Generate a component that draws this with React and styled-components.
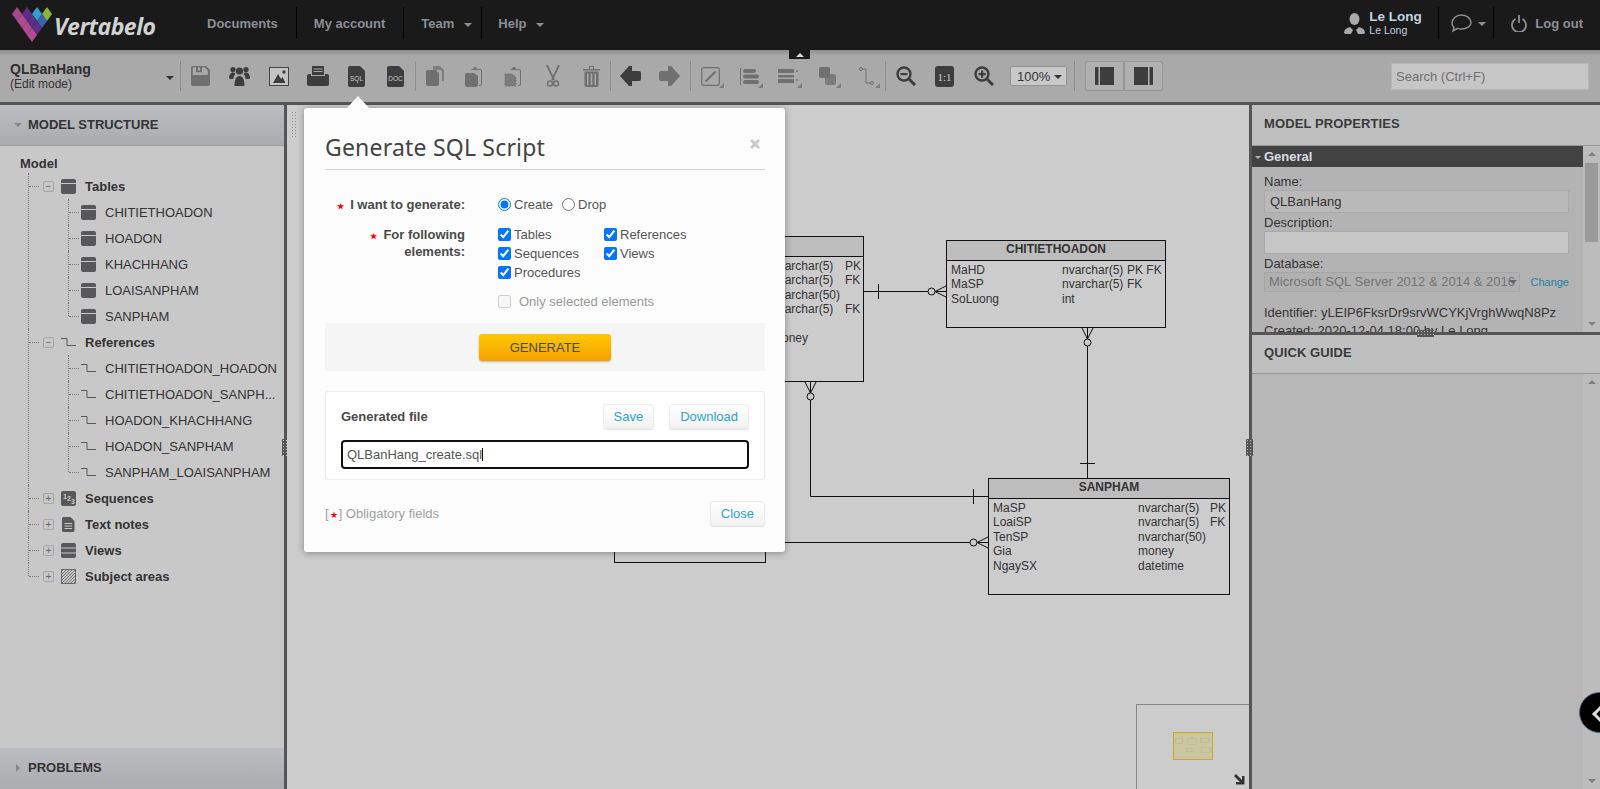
import React from 'react';
import styled, { createGlobalStyle } from 'styled-components';

const GlobalStyle = createGlobalStyle`
  html, body {
    margin: 0;
    height: 100%;
    overflow: hidden;
    background: #ccc;
  }
  * { box-sizing: border-box; }
  body {
    font-family: "Liberation Sans", Arial, sans-serif;
    font-size: 13px;
    color: #333;
  }
`;

const Page = styled.div`
  position: relative;
  width: 1600px;
  height: 789px;
  display: flex;
  flex-direction: column;
  overflow: hidden;
`;

/* top bar */
const Header = styled.header`
  height: 50px;
  flex: none;
  background: #1a1a1a;
  display: flex;
  align-items: center;
  padding-left: 12px;
`;
const Brand = styled.div`
  width: 182px;
  display: flex;
  align-items: center;
`;
const BrandName = styled.span`
  font-family: "Open Sans", sans-serif;
  font-style: italic;
  font-weight: 700;
  font-size: 23px;
  letter-spacing: -0.5px;
  color: #d2d2d2;
  margin: 1px 0 0 2px;
`;
const NavItem = styled.a`
  height: 32px;
  margin-top: -4px;
  display: flex;
  align-items: center;
  padding: 0 18px 0 ${(p) => p.$first ? '13px' : p.$last ? '16px' : '17px'};
  border-right: ${(p) => p.$last ? '0' : '1px solid #000'};
  font-weight: bold;
  font-size: 13px;
  color: #8b8f94;
`;
const NavCaret = styled.i`
  width: 0;
  height: 0;
  margin: 3px -9px 0 10px;
  border: 4px solid transparent;
  border-top: 4px solid #8b8f94;
  border-bottom: 0;
`;
const UserBox = styled.div`
  margin-left: auto;
  display: flex;
  align-items: center;
  height: 32px;
  margin-top: -4px;
`;
const UserNames = styled.div`
  margin-left: 4px;
  width: 69px;
  color: #c3d2e0;
  font-weight: bold;
  font-size: 13.5px;
  line-height: 15px;
  small {
    display: block;
    font-size: 10.5px;
    line-height: 13px;
    font-weight: normal;
  }
`;
const UserPart = styled.div`
  height: 32px;
  display: flex;
  align-items: center;
  gap: 6px;
  padding: 0 ${(p) => p.$pad || 0}px 0 ${(p) => p.$padLeft || 0}px;
  border-left: ${(p) => p.$border ? '1px solid #000' : '0'};
  color: ${(p) => p.$color};
`;
const ChatCaret = styled(NavCaret)`
  margin: 2px 0 0 0;
`;
const LogOut = styled.span`
  margin-left: 2px;
  color: #8b8f94;
  font-weight: bold;
  font-size: 13px;
`;
const CollapseTab = styled.div`
  position: absolute;
  left: 789px;
  top: 50px;
  width: 21px;
  height: 9px;
  background: #1a1a1a;
  z-index: 2;
  display: flex;
  justify-content: center;
  align-items: center;
  &::after {
    content: '';
    border: 4px solid transparent;
    border-bottom: 4px solid #ddd;
    border-top: 0;
  }
`;

/* toolbar */
const Toolbar = styled.div`
  height: 55px;
  flex: none;
  display: flex;
  align-items: center;
  border-bottom: 3px solid #555;
  background: linear-gradient(#8e8e8e 0, #a8a8a8 6px, #ababab 100%);
`;
const Project = styled.div`
  width: 180px;
  height: 52px;
  padding: 12px 0 0 10px;
  position: relative;
  line-height: 14px;
  font-size: 12px;
  color: #333;
  strong {
    display: block;
    font-size: 14px;
    line-height: 15px;
    color: #2e2e2e;
  }
  &::after {
    content: '';
    position: absolute;
    right: 6px;
    top: 26px;
    border: 4px solid transparent;
    border-top: 4px solid #333;
    border-bottom: 0;
  }
`;
const Sep = styled.span`
  width: 1px;
  height: 30px;
  flex: none;
  background: #8e8e8e;
  margin: 0 ${(p) => p.$right || 0}px 0 ${(p) => p.$left || 0}px;
`;
const ToolGroup = styled.div`
  display: flex;
  align-items: center;
`;
const Tool = styled.button`
  position: relative;
  width: 39px;
  height: 30px;
  padding: 0;
  border: 0;
  background: none;
  display: flex;
  align-items: center;
  justify-content: center;
  color: ${(p) => p.$off ? '#707070' : '#3d3d3d'};
  ${(p) => p.$menu && `
    &::after {
      content: '';
      position: absolute;
      right: 6px;
      bottom: 3px;
      border-style: solid;
      border-width: 0 0 5px 5px;
      border-color: transparent transparent #7c7c7c transparent;
    }
  `}
`;
const ZoomSelect = styled.div`
  width: 57px;
  height: 20px;
  margin-left: 7px;
  background: #c9c9c9;
  border: 1px solid #929292;
  border-radius: 2px;
  display: flex;
  align-items: center;
  justify-content: space-between;
  padding: 0 4px 0 6px;
  font-size: 13px;
  color: #333;
  &::after {
    content: '';
    border: 4px solid transparent;
    border-top: 4px solid #333;
    border-bottom: 0;
    margin-top: 2px;
  }
`;
const ToggleGroup = styled.div`
  display: flex;
`;
const Toggle = styled.div`
  width: 39px;
  height: 30px;
  background: #b0b0b0;
  border: 1px solid #969696;
  border-radius: ${(p) => p.$right ? '0 3px 3px 0' : '3px 0 0 3px'};
  display: flex;
  align-items: center;
  justify-content: center;
  color: #3d3d3d;
`;
const Search = styled.div`
  margin: 0 11px 0 auto;
  width: 198px;
  height: 27px;
  background: #c6c6c6;
  border: 1px solid #b6b6b6;
  padding: 0 4px;
  line-height: 25px;
  font-size: 13px;
  color: #6f6f6f;
`;

/* main area */
const Main = styled.div`
  flex: 1;
  display: flex;
  min-height: 0;
`;
const LeftPanel = styled.aside`
  position: relative;
  width: 287px;
  flex: none;
  display: flex;
  flex-direction: column;
  background: #c8c8c8;
  border-right: 3px solid #555;
`;
const PanelHead = styled.div`
  height: ${(p) => p.$h}px;
  flex: none;
  display: flex;
  align-items: center;
  gap: 6px;
  padding: 0 0 2px 14px;
  background: linear-gradient(#bcbdc0, #a9abae);
  border-bottom: ${(p) => p.$open ? '1px solid #9d9d9d' : '0'};
  font-size: 13px;
  font-weight: bold;
  color: #333;
`;
const CaretDown = styled.i`
  border: 4px solid transparent;
  border-top: 4px solid #868686;
  border-bottom: 0;
  margin-top: 2px;
`;
const CaretRight = styled.i`
  border: 4px solid transparent;
  border-left: 4px solid #868686;
  border-right: 0;
  margin: 0 2px;
`;
const TreeBox = styled.div`
  flex: 1;
  padding: 8px 0 0 20px;
`;
const ModelName = styled.div`
  font-weight: bold;
  font-size: 13px;
  line-height: 19px;
  color: #333;
`;
const Branch = styled.ul`
  list-style: none;
  margin: 0 0 0 ${(p) => p.$inner ? 25 : 8}px;
  padding: 0;
`;
const Leaf = styled.li`
  position: relative;
  padding-left: ${(p) => p.$inner ? 13 : 15}px;
  &::before {
    content: '';
    position: absolute;
    left: 0;
    top: 0;
    bottom: 0;
    border-left: 1px dotted #777;
  }
  &:last-child::before { bottom: auto; height: 13px; }
  &::after {
    content: '';
    position: absolute;
    left: 1px;
    top: 13px;
    width: 10px;
    border-top: 1px dotted #777;
  }
`;
const Row = styled.div`
  height: 26px;
  display: flex;
  align-items: center;
  font-size: 13px;
  color: #333;
  white-space: nowrap;
  font-weight: ${(p) => p.$bold ? 'bold' : 'normal'};
`;
const PlusBox = styled.span`
  width: 11px;
  height: 11px;
  flex: none;
  border: 1px solid #a5a5a5;
  border-radius: 2px;
  margin-right: 7px;
  color: #666;
  display: flex;
  align-items: center;
  justify-content: center;
  font-size: 10px;
  line-height: 9px;
  font-weight: normal;
`;
const RowIcon = styled.span`
  width: 15px;
  height: 15px;
  flex: none;
  margin-right: ${(p) => p.$gap || 9}px;
  display: flex;
  color: #58585a;
`;
const Handle = styled.div`
  position: absolute;
  right: ${(p) => p.$right}px;
  top: 334px;
  width: 7px;
  height: 17px;
  background: #555;
  border-radius: 1px;
  background-image: radial-gradient(#bbb 0.6px, transparent 0.7px);
  background-size: 3px 3px;
`;

const Canvas = styled.main`
  position: relative;
  flex: 1;
  background: #ccc;
  overflow: hidden;
`;
const Grip = styled.div`
  position: absolute;
  left: 4px;
  top: 6px;
  width: 6px;
  height: 28px;
  background-image: radial-gradient(#8f8f8f 0.7px, transparent 0.8px);
  background-size: 3px 3px;
`;
const Lines = styled.svg`
  position: absolute;
  left: 0;
  top: 0;
`;
const TableNode = styled.div`
  position: absolute;
  left: ${(p) => p.$x - 287}px;
  top: ${(p) => p.$y - 105}px;
  width: ${(p) => p.$w}px;
  height: ${(p) => p.$h}px;
  background: #ccc;
  border: 1px solid #111;
  font-size: 12px;
  color: #333;
`;
const TableTitle = styled.div`
  height: 20px;
  background: #bdbdbd;
  border-bottom: 1px solid #111;
  text-align: center;
  font-weight: bold;
  line-height: 17px;
`;
const TableRows = styled.div`
  padding: 2px 2px 0 4px;
  display: grid;
  grid-template-columns: ${(p) => p.$cols};
  grid-auto-rows: 14.4px;
  line-height: 14.4px;
  white-space: nowrap;
`;
const MiniMap = styled.div`
  position: absolute;
  right: 0;
  bottom: 0;
  width: 113px;
  height: 85px;
  background: #ccc;
  border: 1px solid #888;
  border-right: 0;
  border-bottom: 0;
`;
const MiniView = styled.div`
  position: absolute;
  left: 36px;
  top: 27px;
  width: 40px;
  height: 28px;
  background: #cbc6a2;
  border: 1px solid #cfa526;
`;
const MiniTable = styled.i`
  position: absolute;
  left: ${(p) => p.$x}px;
  top: ${(p) => p.$y}px;
  width: ${(p) => p.$w}px;
  height: ${(p) => p.$h}px;
  border: 1px solid #c2bb94;
`;
const MiniArrow = styled.svg`
  position: absolute;
  right: 4px;
  bottom: 4px;
`;

/* right panel */
const RightPanel = styled.aside`
  position: relative;
  width: 351px;
  flex: none;
  display: flex;
  flex-direction: column;
  background: #b8b8b8;
  border-left: 3px solid #555;
`;
const PropsHead = styled.div`
  height: ${(p) => p.$h}px;
  flex: none;
  display: flex;
  align-items: center;
  padding: 0 0 3px 12px;
  background: #bfbfbf;
  border-bottom: 1px solid #969696;
  font-weight: bold;
  font-size: 13px;
  letter-spacing: 0.1px;
  color: #3a3a3a;
`;
const PropsBody = styled.div`
  position: relative;
  height: 186px;
  flex: none;
  overflow: hidden;
  background: #b3b3b3;
`;
const GeneralBar = styled.div`
  width: 331px;
  height: 21px;
  background: #424242;
  color: #d8dee4;
  font-weight: bold;
  font-size: 13px;
  display: flex;
  align-items: center;
  gap: 3px;
  padding-left: 3px;
  i {
    border: 3.5px solid transparent;
    border-top: 3.5px solid #b5b5b5;
    border-bottom: 0;
    margin-top: 1px;
  }
`;
const Fields = styled.div`
  width: 331px;
  padding: 7px 0 0 12px;
  font-size: 13px;
  color: #333;
  line-height: 16px;
`;
const FieldLabel = styled.div`
  margin-top: ${(p) => p.$top || 0}px;
`;
const Field = styled.div`
  width: 305px;
  height: 23px;
  padding: 0 5px;
  line-height: 21px;
  background: ${(p) => p.$bg};
  border: 1px solid #a9a9a9;
`;
const DbRow = styled.div`
  display: flex;
  align-items: center;
  justify-content: space-between;
  width: 305px;
  margin-bottom: 12px;
  a {
    color: #267f9f;
    font-size: 11px;
  }
`;
const DbSelect = styled.div`
  position: relative;
  width: 256px;
  height: 20px;
  overflow: hidden;
  white-space: nowrap;
  padding: 0 4px;
  line-height: 18px;
  color: #737373;
  font-size: 13px;
  background: #b0b0b0;
  border: 1px solid #a5a5a5;
  &::after {
    content: '';
    position: absolute;
    right: 2px;
    top: 7px;
    border: 4px solid transparent;
    border-top: 4px solid #666;
    border-bottom: 0;
  }
`;
const InfoLine = styled.div`
  line-height: 18px;
  white-space: nowrap;
`;
const ScrollCol = styled.div`
  position: absolute;
  right: 0;
  top: 0;
  bottom: 0;
  width: 17px;
  background: #bcbcbc;
  display: flex;
  flex-direction: column;
  align-items: center;
  justify-content: space-between;
  padding: 6px 0;
`;
const ScrollThumb = styled.div`
  position: absolute;
  left: 2px;
  top: 17px;
  width: 13px;
  height: 79px;
  background: #9a9a9a;
`;
const ScrollUp = styled.i`
  border: 4px solid transparent;
  border-bottom: 4px solid #7f7f7f;
  border-top: 0;
`;
const ScrollDown = styled.i`
  border: 4px solid transparent;
  border-top: 4px solid #7f7f7f;
  border-bottom: 0;
`;
const SplitBar = styled.div`
  position: relative;
  height: 3px;
  flex: none;
  background: #555;
  &::after {
    content: '';
    position: absolute;
    left: 165px;
    top: -2px;
    width: 17px;
    height: 7px;
    background-color: #555;
    background-image: radial-gradient(#bbb 0.6px, transparent 0.7px);
    background-size: 3px 3px;
  }
`;
const GuideBody = styled.div`
  position: relative;
  flex: 1;
  background: #b7b7b7;
`;
const ChatBubble = styled.div`
  position: absolute;
  left: 1579px;
  top: 692px;
  width: 41px;
  height: 41px;
  border-radius: 50%;
  background: #000;
  border: 1px solid #4d6c80;
  z-index: 3;
  &::after {
    content: '';
    position: absolute;
    left: 15px;
    top: 14px;
    width: 11px;
    height: 11px;
    border-left: 3px solid #ddd;
    border-bottom: 3px solid #ddd;
    transform: rotate(45deg);
  }
`;

/* modal */
const Modal = styled.section`
  position: absolute;
  left: 304px;
  top: 108px;
  width: 481px;
  height: 444px;
  z-index: 2;
  padding: 0 20px 0 21px;
  background: #fcfcfc;
  border-radius: 3px;
  box-shadow: 0 1px 7px rgba(0, 0, 0, 0.35);
  &::before {
    content: '';
    position: absolute;
    left: 43px;
    top: -12px;
    border: 11px solid transparent;
    border-bottom: 12px solid #fcfcfc;
    border-top: 0;
  }
`;
const ModalTitle = styled.div`
  height: 62px;
  padding-top: 23px;
  border-bottom: 1px solid #d5d5d5;
  display: flex;
  justify-content: space-between;
  h2 {
    margin: 0;
    font-family: "Noto Sans", sans-serif;
    font-weight: normal;
    font-size: 23px;
    line-height: 33px;
    letter-spacing: 0.2px;
    color: #444;
  }
  svg { margin: 8px 5px 0 0; }
`;
const FormRow = styled.div`
  display: flex;
  margin-top: ${(p) => p.$top}px;
`;
const FormLabel = styled.div`
  width: 140px;
  margin-right: 33px;
  text-align: right;
  font-weight: bold;
  font-size: 13px;
  line-height: ${(p) => p.$lh}px;
  color: #4a4a4a;
  i {
    color: #f00;
    font-style: normal;
    font-size: 8px;
    margin-right: 6px;
  }
`;
const Choices = styled.div`
  display: grid;
  margin-top: -2px;
  grid-template-columns: repeat(2, 106px);
  grid-auto-rows: 19px;
`;
const RadioRow = styled.div`
  display: flex;
  height: 19px;
  gap: 9px;
`;
const Choice = styled.label`
  display: flex;
  align-items: center;
  height: 19px;
  gap: ${(p) => p.$gap || 3}px;
  font-size: 13px;
  color: ${(p) => p.$muted ? '#999' : '#555'};
  input {
    width: 13px;
    height: 13px;
    margin: 0;
    flex: none;
  }
`;
const Strip = styled.div`
  margin-top: 12px;
  height: 48px;
  background: #f5f5f5;
  display: flex;
  align-items: center;
  justify-content: center;
`;
const GenerateButton = styled.button`
  width: 132px;
  height: 27px;
  padding: 0;
  border: 0;
  border-radius: 3px;
  background: linear-gradient(#ffc900, #f5a100);
  box-shadow: 0 1px 2px rgba(0, 0, 0, 0.25);
  font-family: inherit;
  font-size: 13px;
  color: #4a4a4a;
`;
const FileCard = styled.div`
  margin-top: 20px;
  height: 89px;
  padding: 12px 15px;
  background: #fff;
  border: 1px solid #ececec;
  border-radius: 3px;
`;
const FileHead = styled.div`
  display: flex;
  align-items: center;
  gap: 15px;
  strong {
    margin-right: auto;
    color: #4a4a4a;
    font-size: 13px;
  }
`;
const SoftButton = styled.button`
  height: 25px;
  padding: 0 ${(p) => p.$pad}px;
  border: 1px solid #ececec;
  border-radius: 3px;
  background: linear-gradient(#fff, #f2f2f2);
  box-shadow: 0 1px 1px rgba(0, 0, 0, 0.12);
  font-family: inherit;
  font-size: 13px;
  color: #31a3cc;
`;
const FileName = styled.div`
  margin-top: 11px;
  height: 29px;
  padding: 0 4px;
  border: 2px solid #111;
  border-radius: 4px;
  background: #fff;
  display: flex;
  align-items: center;
  font-size: 13px;
  color: #555;
  b {
    width: 1px;
    height: 13px;
    background: #111;
  }
`;
const ModalFoot = styled.div`
  margin-top: 21px;
  display: flex;
  align-items: center;
  justify-content: space-between;
  font-size: 13px;
  color: #a0a0a0;
  i {
    color: #f00;
    font-style: normal;
    font-size: 9px;
    padding: 0 1px;
  }
`;

const Svg = ({ w = 20, h = 20, children, ...rest }) => (
  <svg width={w} height={h} viewBox={`0 0 ${w} ${h}`} fill="currentColor" {...rest}>{children}</svg>
);

// lattice of diamonds, top row down to the tip
const logoTiles = [
  [5, 7, '#a8488a'], [15, 7, '#5b2f86'], [25, 7, '#2f9fd2'], [35, 7, '#8bb53a'],
  [10, 14, '#b04b90'], [20, 14, '#5b2f86'], [30, 14, '#3d62a8'],
  [15, 21, '#b04b90'], [25, 21, '#5b2f86'],
  [20, 28, '#b04b90'],
];

const Logo = () => (
  <svg width="40" height="36" viewBox="0 0 40 36">
    {logoTiles.map(([x, y, fill]) => (
      <polygon key={`${x}-${y}`} points={`${x - 5},${y} ${x},${y - 7} ${x + 5},${y} ${x},${y + 7}`} fill={fill} />
    ))}
  </svg>
);

const I = {
  save: <Svg w={19} h={20}><path d="M2 0h13l4 4v14a2 2 0 0 1-2 2H2a2 2 0 0 1-2-2V2a2 2 0 0 1 2-2zm.8 1.2a1 1 0 0 0-1 1V9h15V4.5l-3-3.3H11v5H5v-5zM7 1.5h2v3H7z" fillRule="evenodd" /></Svg>,
  people: <Svg w={21} h={20}><circle cx="10.5" cy="5" r="3.6" /><circle cx="4" cy="3.6" r="2.6" /><circle cx="17" cy="3.6" r="2.6" /><path d="M5.5 20c0-6 1.500-10 5-10s5 4 5 10zM0 12c0-3 1.500-5.500 4-5.500 1 0 2 .4 2.500 1.200C5 9.500 4.500 11 4.300 13H1zM21 12c0-3-1.500-5.500-4-5.500-1 0-2 .4-2.500 1.200 1.500 1.800 2 3.300 2.200 5.300H20z" /></Svg>,
  image: <Svg w={20} h={19}><rect x=".5" y=".5" width="19" height="18" fill="#c4c4c4" stroke="#444" /><path d="M4 16l5-9 3 5 1.500-2 3 6z" /><circle cx="15" cy="5" r="1.700" /></Svg>,
  print: <Svg w={22} h={20}><path d="M5 0h12v9H5zm1.500 2.500v1h9v-1zm0 2.500v1h9V5z" fillRule="evenodd" /><path d="M4 8v2h14V8h2a2 2 0 0 1 2 2v8a2 2 0 0 1-2 2H2a2 2 0 0 1-2-2v-8a2 2 0 0 1 2-2z" /></Svg>,
  copy: <Svg w={19} h={20}><path d="M7 0h7l4 4v11h-2V6a2 2 0 0 0-2-2H7z" opacity=".75" /><path d="M2 4h8l3 3v11a2 2 0 0 1-2 2H2a2 2 0 0 1-2-2V6a2 2 0 0 1 2-2z" /></Svg>,
  paste: <Svg w={19} h={21}><path d="M6 3h2l1-2h2l1 2h3a2 2 0 0 1 2 2v13a2 2 0 0 1-2 2h-1v-1h1a1 1 0 0 0 1-1V5a1 1 0 0 0-1-1H7z" /><path d="M2 7h7l4 3v9a2 2 0 0 1-2 2H2a2 2 0 0 1-2-2V9a2 2 0 0 1 2-2z" /></Svg>,
  pasteDashed: <Svg w={19} h={21}><path d="M6 3h2l1-2h2l1 2h3a2 2 0 0 1 2 2v13a2 2 0 0 1-2 2h-1v-1h1a1 1 0 0 0 1-1V5a1 1 0 0 0-1-1H7z" /><path d="M1 8h7l4 3v9H1z" stroke="currentColor" strokeDasharray="1.500 1.500" fill="currentColor" fillOpacity=".8" /></Svg>,
  scissors: <Svg w={14} h={22}><path d="M1 0l7 15M13 0L6 15" stroke="currentColor" strokeWidth="1.800" fill="none" /><circle cx="4" cy="18.500" r="2.500" fill="none" stroke="currentColor" strokeWidth="1.500" /><circle cx="10" cy="18.500" r="2.500" fill="none" stroke="currentColor" strokeWidth="1.500" /></Svg>,
  trash: <Svg w={17} h={21}><path d="M0 3h17v1.500H0zM6 0h5v3h-1V1H7v2H6z" /><path d="M1.500 5.500h14V19a2 2 0 0 1-2 2h-10a2 2 0 0 1-2-2zM4 7.500V19h1.500V7.500zm3.700 0V19h1.600V7.500zm3.800 0V19H13V7.500z" fillRule="evenodd" /></Svg>,
  back: <Svg w={21} h={20}><path d="M0 10L9 0h3v5h7a2 2 0 0 1 2 2v6a2 2 0 0 1-2 2h-7v5H9z" /></Svg>,
  forward: <Svg w={21} h={20}><path d="M21 10L12 0H9v5H2a2 2 0 0 0-2 2v6a2 2 0 0 0 2 2h7v5h3z" /></Svg>,
  lineBox: <Svg w={19} h={19}><rect x=".7" y=".7" width="17.600" height="17.600" rx="2" fill="none" stroke="currentColor" strokeWidth="1.200" /><path d="M4.500 14.500l10-10" stroke="currentColor" strokeWidth="2" /></Svg>,
  align: <Svg w={19} h={17}><rect x="0" y="0" width="1" height="17" /><rect x="3" y="1" width="13" height="4" rx="2" /><rect x="3" y="6.500" width="16" height="4" rx="2" /><rect x="3" y="12" width="16" height="4" rx="2" /></Svg>,
  dist: <Svg w={21} h={16}><rect x="0" y="1" width="16" height="4" /><rect x="0" y="7" width="16" height="2.500" /><rect x="0" y="11" width="16" height="4" /><path d="M18 2l2 2M20 2l-2 2M18 13l1-2 1 2" stroke="currentColor" strokeWidth=".8" fill="none" /></Svg>,
  layers: <Svg w={17} h={18}><rect x="0" y="0" width="11" height="11" rx="2" /><rect x="6" y="7" width="11" height="11" rx="2" opacity=".8" /></Svg>,
  connector: <Svg w={15} h={18}><circle cx="2" cy="2" r="1.500" fill="none" stroke="currentColor" /><circle cx="13" cy="16" r="1.500" fill="none" stroke="currentColor" /><path d="M3.500 2H7v14h4.500" fill="none" stroke="currentColor" /></Svg>,
  zoomOut: <Svg w={20} h={20}><circle cx="8" cy="8" r="6.500" fill="none" stroke="currentColor" strokeWidth="2.400" /><path d="M13 13l6 6" stroke="currentColor" strokeWidth="3" /><rect x="4.500" y="7" width="7" height="2.200" /></Svg>,
  zoomIn: <Svg w={20} h={20}><circle cx="8" cy="8" r="6.500" fill="none" stroke="currentColor" strokeWidth="2.400" /><path d="M13 13l6 6" stroke="currentColor" strokeWidth="3" /><path d="M4.500 7h2.500V4.500h2.200V7h2.500v2.200H9.200v2.500H7V9.200H4.500z" /></Svg>,
  panelLeft: <Svg w={19} h={18}><rect x="0" y="0" width="3.500" height="18" /><rect x="5" y="0" width="14" height="18" /></Svg>,
  panelRight: <Svg w={19} h={18}><rect x="0" y="0" width="14" height="18" /><rect x="15.500" y="0" width="3.500" height="18" /></Svg>,
  user: <Svg w={21} h={21}><ellipse cx="10.500" cy="6" rx="5" ry="6" /><path d="M0 20c0-3 2-5 6-6l3 3-2 4H1.500zM21 20c0-3-2-5-6-6l-3 3 2 4h5.500z" /></Svg>,
  chat: <svg width="21" height="20" viewBox="0 0 21 20" fill="none" stroke="currentColor" strokeWidth="1.500"><path d="M3 14.500C1.500 13 1 11.500 1 10c0-4 4-8 9.500-8S20 6 20 9.500 16 16 10.500 16c-1.500 0-3-.2-4-.7L2 18z" /></svg>,
  power: <svg width="16" height="17" viewBox="0 0 16 17" fill="none" stroke="currentColor" strokeWidth="1.800"><path d="M4.500 4A7 7 0 1 0 11.500 4M8 0v8" /></svg>,
};

const DocIcon = ({ label }) => (
  <Svg w={17} h={21}>
    <path d="M2 0h10l5 5v14a2 2 0 0 1-2 2H2a2 2 0 0 1-2-2V2a2 2 0 0 1 2-2z" />
    <text x="8.500" y="15" textAnchor="middle" fontSize="6.500" fontFamily="Liberation Sans" fill="#ccc">{label}</text>
  </Svg>
);

const TableIcon = () => (
  <Svg w={15} h={15}>
    <path d="M2 0h11a2 2 0 0 1 2 2v2H0V2a2 2 0 0 1 2-2zM0 5h15v8a2 2 0 0 1-2 2H2a2 2 0 0 1-2-2z" />
  </Svg>
);
const RefIcon = () => (
  <svg width="15" height="15" viewBox="0 0 15 15" fill="none" stroke="currentColor">
    <path d="M0 3.500h6v7h9" />
  </svg>
);
const SeqIcon = () => (
  <Svg w={15} h={15}>
    <rect width="15" height="15" rx="2" />
    <text x="2" y="8" fontSize="7" fill="#ccc" fontFamily="Liberation Sans">1</text>
    <text x="6" y="10" fontSize="7" fill="#ccc" fontFamily="Liberation Sans">2</text>
    <text x="10" y="13" fontSize="7" fill="#ccc" fontFamily="Liberation Sans">3</text>
  </Svg>
);
const NoteIcon = () => (
  <Svg w={15} h={15}>
    <path d="M2.500 0h7l4 4v9.500a1.500 1.500 0 0 1-1.500 1.500H2.500A1.500 1.500 0 0 1 1 13.500v-12A1.500 1.500 0 0 1 2.500 0zM3.500 6v1H11V6zm0 2.500v1H11v-1zm0 2.500v1H11v-1z" fillRule="evenodd" />
  </Svg>
);
const ViewIcon = () => (
  <Svg w={15} h={15}>
    <path d="M2 0h11a2 2 0 0 1 2 2v2.500H0V2a2 2 0 0 1 2-2zM0 5.500h15v4H0zM0 10.500h15V13a2 2 0 0 1-2 2H2a2 2 0 0 1-2-2z" />
  </Svg>
);
const AreaIcon = () => (
  <svg width="15" height="15" viewBox="0 0 15 15" fill="none" stroke="#58585a" strokeWidth=".8">
    <rect x=".5" y=".5" width="14" height="14" />
    <path d="M0 3L3 0M0 6L6 0M0 9L9 0M0 12L12 0M0 15L15 0M3 15L15 3M6 15L15 6M9 15L15 9M12 15L15 12" />
  </svg>
);

const tableNames = ['CHITIETHOADON', 'HOADON', 'KHACHHANG', 'LOAISANPHAM', 'SANPHAM'];
const refNames = ['CHITIETHOADON_HOADON', 'CHITIETHOADON_SANPH...', 'HOADON_KHACHHANG', 'HOADON_SANPHAM', 'SANPHAM_LOAISANPHAM'];
const closedGroups = [
  ['Sequences', <SeqIcon />],
  ['Text notes', <NoteIcon />],
  ['Views', <ViewIcon />],
  ['Subject areas', <AreaIcon />],
];

const ModelTree = () => (
  <TreeBox>
    <ModelName>Model</ModelName>
    <Branch>
      <Leaf>
        <Row $bold><PlusBox>−</PlusBox><RowIcon><TableIcon /></RowIcon>Tables</Row>
        <Branch $inner>
          {tableNames.map((name) => (
            <Leaf $inner key={name}><Row><RowIcon><TableIcon /></RowIcon>{name}</Row></Leaf>
          ))}
        </Branch>
      </Leaf>
      <Leaf>
        <Row $bold><PlusBox>−</PlusBox><RowIcon><RefIcon /></RowIcon>References</Row>
        <Branch $inner>
          {refNames.map((name) => (
            <Leaf $inner key={name}><Row><RowIcon><RefIcon /></RowIcon>{name}</Row></Leaf>
          ))}
        </Branch>
      </Leaf>
      {closedGroups.map(([name, icon]) => (
        <Leaf key={name}>
          <Row $bold><PlusBox>+</PlusBox><RowIcon>{icon}</RowIcon>{name}</Row>
        </Leaf>
      ))}
    </Branch>
  </TreeBox>
);

const ErTable = ({ x, y, w, h, title, cols, rows = [] }) => (
  <TableNode $x={x} $y={y} $w={w} $h={h}>
    <TableTitle>{title}</TableTitle>
    <TableRows $cols={cols}>
      {rows.flat().map((cell, i) => <span key={i}>{cell}</span>)}
    </TableRows>
  </TableNode>
);

const CrowFoot = ({ cx, cy, prongs }) => (
  <>
    <circle cx={cx} cy={cy} r="3.500" />
    <path d={prongs} />
  </>
);

const Diagram = () => (
  <Canvas>
    <Grip />
    {/* the modal covers the rest of these two tables */}
    <ErTable x={620} y={236} w={244} h={146} cols="147px 73px 20px"
      rows={[['', 'nvarchar(5)', 'PK'], ['', 'nvarchar(5)', 'FK'], ['', 'nvarchar(50)', ''], ['', 'nvarchar(5)', 'FK'], ['', '', ''], ['', 'money', '']]} />
    <ErTable x={614} y={450} w={152} h={113} />
    <ErTable x={946} y={240} w={220} h={88} title="CHITIETHOADON" cols="111px 65px 40px"
      rows={[['MaHD', 'nvarchar(5)', 'PK FK'], ['MaSP', 'nvarchar(5)', 'FK'], ['SoLuong', 'int', '']]} />
    <ErTable x={988} y={478} w={242} h={117} title="SANPHAM" cols="145px 72px 20px"
      rows={[['MaSP', 'nvarchar(5)', 'PK'], ['LoaiSP', 'nvarchar(5)', 'FK'], ['TenSP', 'nvarchar(50)', ''], ['Gia', 'money', ''], ['NgaySX', 'datetime', '']]} />
    <Lines width="963" height="684" viewBox="287 105 963 684" fill="none" stroke="#111">
      <path d="M864 291.500H928M878.500 284v15" />
      <CrowFoot cx={931.500} cy={291.500} prongs="M935 291.500L946 286M935 291.500H946M935 291.500L946 297" />
      <path d="M1087.500 346V478M1080 463.500h15" />
      <CrowFoot cx={1087.500} cy={342.500} prongs="M1087.500 339L1082 328M1087.500 339V328M1087.500 339L1093 328" />
      <path d="M810.500 400V496.500H988M973.500 489v15" />
      <CrowFoot cx={810.500} cy={396.500} prongs="M810.500 393L805 382M810.500 393V382M810.500 393L816 382" />
      <path d="M766 542.500H970" />
      <CrowFoot cx={973.500} cy={542.500} prongs="M977 542.500L988 537M977 542.500H988M977 542.500L988 548" />
    </Lines>
    <MiniMap>
      <MiniView>
        <MiniTable $x={1} $y={5} $w={8} $h={6} />
        <MiniTable $x={13} $y={5} $w={10} $h={7} />
        <MiniTable $x={26} $y={5} $w={9} $h={5} />
        <MiniTable $x={12} $y={15} $w={8} $h={4} />
        <MiniTable $x={27} $y={14} $w={10} $h={6} />
      </MiniView>
      <MiniArrow width="11" height="11" viewBox="0 0 11 11" fill="#333">
        <path d="M0 2L2 0l6 6V2h2.500v8.500H2V8h4z" />
      </MiniArrow>
    </MiniMap>
  </Canvas>
);

const Properties = () => (
  <RightPanel>
    <PropsHead $h={41}>MODEL PROPERTIES</PropsHead>
    <PropsBody>
      <GeneralBar><i />General</GeneralBar>
      <Fields>
        <FieldLabel>Name:</FieldLabel>
        <Field $bg="#b9b9b9">QLBanHang</Field>
        <FieldLabel $top={2}>Description:</FieldLabel>
        <Field $bg="#c6c6c6" />
        <FieldLabel $top={2}>Database:</FieldLabel>
        <DbRow>
          <DbSelect>Microsoft SQL Server 2012 &amp; 2014 &amp; 2016</DbSelect>
          <a>Change</a>
        </DbRow>
        <InfoLine>Identifier: yLEIP6FksrDr9srvWCYKjVrghWwqN8Pz</InfoLine>
        <InfoLine>Created: 2020-12-04 18:00 by Le Long</InfoLine>
      </Fields>
      <ScrollCol><ScrollUp /><ScrollThumb /><ScrollDown /></ScrollCol>
    </PropsBody>
    <SplitBar />
    <PropsHead $h={39}>QUICK GUIDE</PropsHead>
    <GuideBody>
      <ScrollCol><ScrollUp /><ScrollDown /></ScrollCol>
    </GuideBody>
    <Handle $right={347} />
  </RightPanel>
);

const SqlModal = () => (
  <Modal>
    <ModalTitle>
      <h2>Generate SQL Script</h2>
      <svg width="10" height="10" viewBox="0 0 10 10" stroke="#c9c9c9" strokeWidth="3"><path d="M1 1l8 8M9 1l-8 8" /></svg>
    </ModalTitle>
    <FormRow $top={25}>
      <FormLabel $lh={19}><i>★</i>I want to generate:</FormLabel>
      <RadioRow>
        <Choice><input type="radio" name="mode" defaultChecked />Create</Choice>
        <Choice><input type="radio" name="mode" />Drop</Choice>
      </RadioRow>
    </FormRow>
    <FormRow $top={11}>
      <FormLabel $lh={15}><i>★</i>For following<br />elements:</FormLabel>
      <Choices>
        <Choice><input type="checkbox" defaultChecked />Tables</Choice>
        <Choice><input type="checkbox" defaultChecked />References</Choice>
        <Choice><input type="checkbox" defaultChecked />Sequences</Choice>
        <Choice><input type="checkbox" defaultChecked />Views</Choice>
        <Choice><input type="checkbox" defaultChecked />Procedures</Choice>
      </Choices>
    </FormRow>
    <FormRow $top={10}>
      <FormLabel $lh={19} />
      <Choice $muted $gap={8}><input type="checkbox" disabled />Only selected elements</Choice>
    </FormRow>
    <Strip><GenerateButton>GENERATE</GenerateButton></Strip>
    <FileCard>
      <FileHead>
        <strong>Generated file</strong>
        <SoftButton $pad={10}>Save</SoftButton>
        <SoftButton $pad={10}>Download</SoftButton>
      </FileHead>
      <FileName>QLBanHang_create.sql<b /></FileName>
    </FileCard>
    <ModalFoot>
      <span>[<i>★</i>] Obligatory fields</span>
      <SoftButton $pad={10}>Close</SoftButton>
    </ModalFoot>
  </Modal>
);

export default function App() {
  return (
    <Page>
      <GlobalStyle />
      <Header>
        <Brand><Logo /><BrandName>Vertabelo</BrandName></Brand>
        <NavItem $first>Documents</NavItem>
        <NavItem>My account</NavItem>
        <NavItem>Team<NavCaret /></NavItem>
        <NavItem $last>Help<NavCaret /></NavItem>
        <UserBox>
          <UserPart $color="#a9a9a9">{I.user}</UserPart>
          <UserNames>Le Long<small>Le Long</small></UserNames>
          <UserPart $border $padLeft={12} $pad={7} $color="#8f8f8f">{I.chat}<ChatCaret /></UserPart>
          <UserPart $border $padLeft={17} $pad={17} $color="#8f8f8f">{I.power}<LogOut>Log out</LogOut></UserPart>
        </UserBox>
      </Header>
      <CollapseTab />
      <Toolbar>
        <Project><strong>QLBanHang</strong>(Edit mode)</Project>
        <Sep />
        <ToolGroup>
          <Tool $off>{I.save}</Tool>
          <Tool>{I.people}</Tool>
          <Tool>{I.image}</Tool>
          <Tool>{I.print}</Tool>
          <Tool><DocIcon label="SQL" /></Tool>
          <Tool><DocIcon label="DOC" /></Tool>
        </ToolGroup>
        <Sep />
        <ToolGroup>
          <Tool $off>{I.copy}</Tool>
          <Tool $off>{I.paste}</Tool>
          <Tool $off>{I.pasteDashed}</Tool>
          <Tool $off>{I.scissors}</Tool>
          <Tool $off>{I.trash}</Tool>
        </ToolGroup>
        <Sep $left={-1} />
        <ToolGroup>
          <Tool>{I.back}</Tool>
          <Tool $off>{I.forward}</Tool>
        </ToolGroup>
        <Sep $left={1} />
        <ToolGroup>
          <Tool $off $menu>{I.lineBox}</Tool>
          <Tool $off $menu>{I.align}</Tool>
          <Tool $off $menu>{I.dist}</Tool>
          <Tool $off $menu>{I.layers}</Tool>
          <Tool $off $menu>{I.connector}</Tool>
        </ToolGroup>
        <Sep $left={-1} />
        <ToolGroup>
          <Tool>{I.zoomOut}</Tool>
          <Tool>
            <Svg w={19} h={21}>
              <rect width="19" height="21" rx="3" />
              <text x="9.500" y="14.500" textAnchor="middle" fontSize="11" fontFamily="Liberation Serif" fill="#ccc">1:1</text>
            </Svg>
          </Tool>
          <Tool>{I.zoomIn}</Tool>
        </ToolGroup>
        <ZoomSelect>100%</ZoomSelect>
        <Sep $left={7} $right={10} />
        <ToggleGroup>
          <Toggle>{I.panelLeft}</Toggle>
          <Toggle $right>{I.panelRight}</Toggle>
        </ToggleGroup>
        <Search>Search (Ctrl+F)</Search>
      </Toolbar>
      <Main>
        <LeftPanel>
          <PanelHead $h={41} $open><CaretDown />MODEL STRUCTURE</PanelHead>
          <ModelTree />
          <PanelHead $h={41}><CaretRight />PROBLEMS</PanelHead>
          <Handle $right={-5} />
        </LeftPanel>
        <Diagram />
        <Properties />
      </Main>
      <SqlModal />
      <ChatBubble />
    </Page>
  );
}
